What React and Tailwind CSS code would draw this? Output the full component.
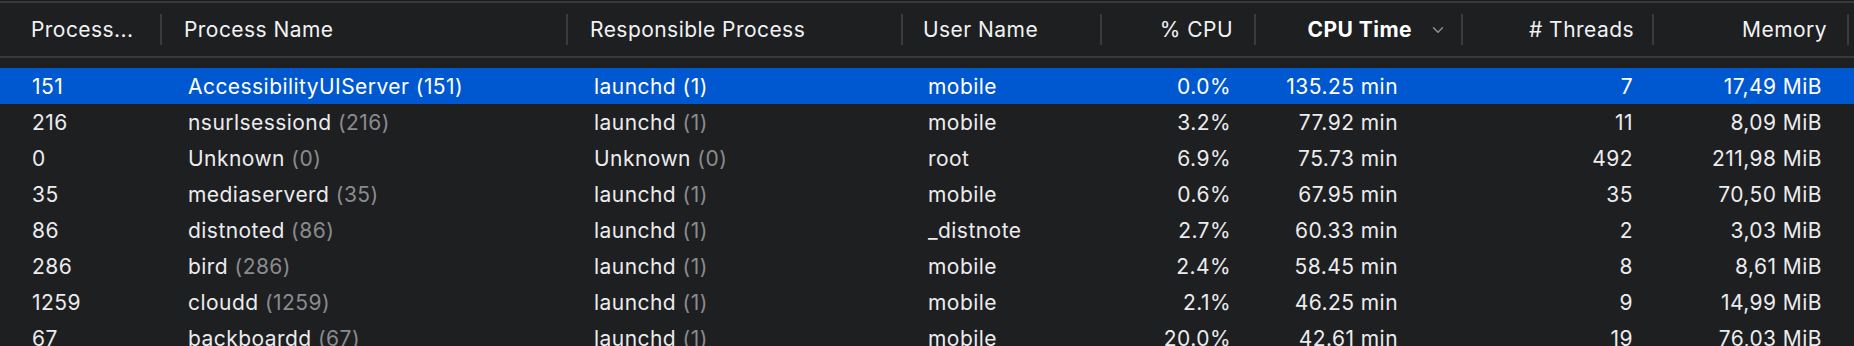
import { ChevronDown } from "lucide-react";

const columns = [
  { key: "pid", label: "Process...", width: "w-[162px]", head: "pl-[31px] pr-2 text-left", cell: "pl-[32px] text-left" },
  { key: "name", label: "Process Name", width: "w-[406px]", head: "pl-[22px] text-left", cell: "pl-[26px] text-left" },
  { key: "resp", label: "Responsible Process", width: "w-[335px]", head: "pl-[22px] text-left", cell: "pl-[26px] text-left" },
  { key: "user", label: "User Name", width: "w-[199px]", head: "pl-[20px] text-left", cell: "pl-[25px] text-left" },
  { key: "cpu", label: "% CPU", width: "w-[154px]", head: "pr-[23px] text-right", cell: "pr-[25px] text-right" },
  { key: "time", label: "CPU Time", width: "w-[207px]", head: "pr-[16px] text-right", cell: "pr-[65px] text-right" },
  { key: "threads", label: "# Threads", width: "w-[191px]", head: "pr-[20px] text-right", cell: "pr-[21px] text-right" },
  { key: "mem", label: "Memory", width: "w-[195px]", head: "pr-[22px] text-right", cell: "pr-[27px] text-right" },
];

const rows = [
  { pid: "151", name: "AccessibilityUIServer", resp: ["launchd", "1"], user: "mobile", cpu: "0.0%", time: "135.25 min", threads: "7", mem: "17,49 MiB" },
  { pid: "216", name: "nsurlsessiond", resp: ["launchd", "1"], user: "mobile", cpu: "3.2%", time: "77.92 min", threads: "11", mem: "8,09 MiB" },
  { pid: "0", name: "Unknown", resp: ["Unknown", "0"], user: "root", cpu: "6.9%", time: "75.73 min", threads: "492", mem: "211,98 MiB" },
  { pid: "35", name: "mediaserverd", resp: ["launchd", "1"], user: "mobile", cpu: "0.6%", time: "67.95 min", threads: "35", mem: "70,50 MiB" },
  { pid: "86", name: "distnoted", resp: ["launchd", "1"], user: "_distnote", cpu: "2.7%", time: "60.33 min", threads: "2", mem: "3,03 MiB" },
  { pid: "286", name: "bird", resp: ["launchd", "1"], user: "mobile", cpu: "2.4%", time: "58.45 min", threads: "8", mem: "8,61 MiB" },
  { pid: "1259", name: "cloudd", resp: ["launchd", "1"], user: "mobile", cpu: "2.1%", time: "46.25 min", threads: "9", mem: "14,99 MiB" },
  { pid: "67", name: "backboardd", resp: ["launchd", "1"], user: "mobile", cpu: "20.0%", time: "42.61 min", threads: "19", mem: "76,03 MiB" },
];

function Cell({ col, row, selected }) {
  const dim = selected ? "text-white" : "text-[#8b8b8e]";
  let content = row[col.key];
  if (col.key === "name") {
    content = (
      <>
        {row.name} <span className={dim}>({row.pid})</span>
      </>
    );
  }
  if (col.key === "resp") {
    content = (
      <>
        {row.resp[0]} <span className={dim}>({row.resp[1]})</span>
      </>
    );
  }
  return (
    <div className={`${col.width} ${col.cell} shrink-0 whitespace-nowrap pt-[2px] leading-[34px]`}>
      {content}
    </div>
  );
}

export default function App() {
  return (
    <div
      className="w-[1854px] h-[346px] overflow-hidden bg-[#1e1f21] text-[#ececee] text-[21px] tracking-[0.45px] leading-none"
      style={{ fontFamily: "Inter, 'Liberation Sans', sans-serif" }}
    >
      <div className="h-[1px] bg-[#1a1b1c]" />
      <div className="h-[2px] bg-[#38393b]" />

      {/* header */}
      <div className="flex h-[53px] items-center">
        {columns.map((col) => (
          <div
            key={col.key}
            className={`${col.width} ${col.head} shrink-0 relative h-full flex items-center ${
              col.head.includes("text-right") ? "justify-end" : "justify-start"
            } whitespace-nowrap`}
          >
            {col.key === "time" ? (
              <div className="flex items-center gap-[17px]">
                <span className="font-bold text-white">{col.label}</span>
                <ChevronDown size={18} strokeWidth={2} className="text-[#8e8e90]" />
              </div>
            ) : (
              <span className="text-[#f2f2f4]">{col.label}</span>
            )}
            <div className="absolute right-0 top-[11px] h-[31px] w-[2px] bg-[#3a3b3d]" />
          </div>
        ))}
      </div>

      <div className="h-[2px] bg-[#38393b]" />
      <div className="h-[10px]" />

      {/* rows */}
      {rows.map((row, i) => {
        const selected = i === 0;
        return (
          <div
            key={row.pid}
            className={`flex h-[36px] items-center ${selected ? "bg-[#0058d0] text-white" : ""}`}
          >
            {columns.map((col) => (
              <Cell key={col.key} col={col} row={row} selected={selected} />
            ))}
          </div>
        );
      })}
    </div>
  );
}
